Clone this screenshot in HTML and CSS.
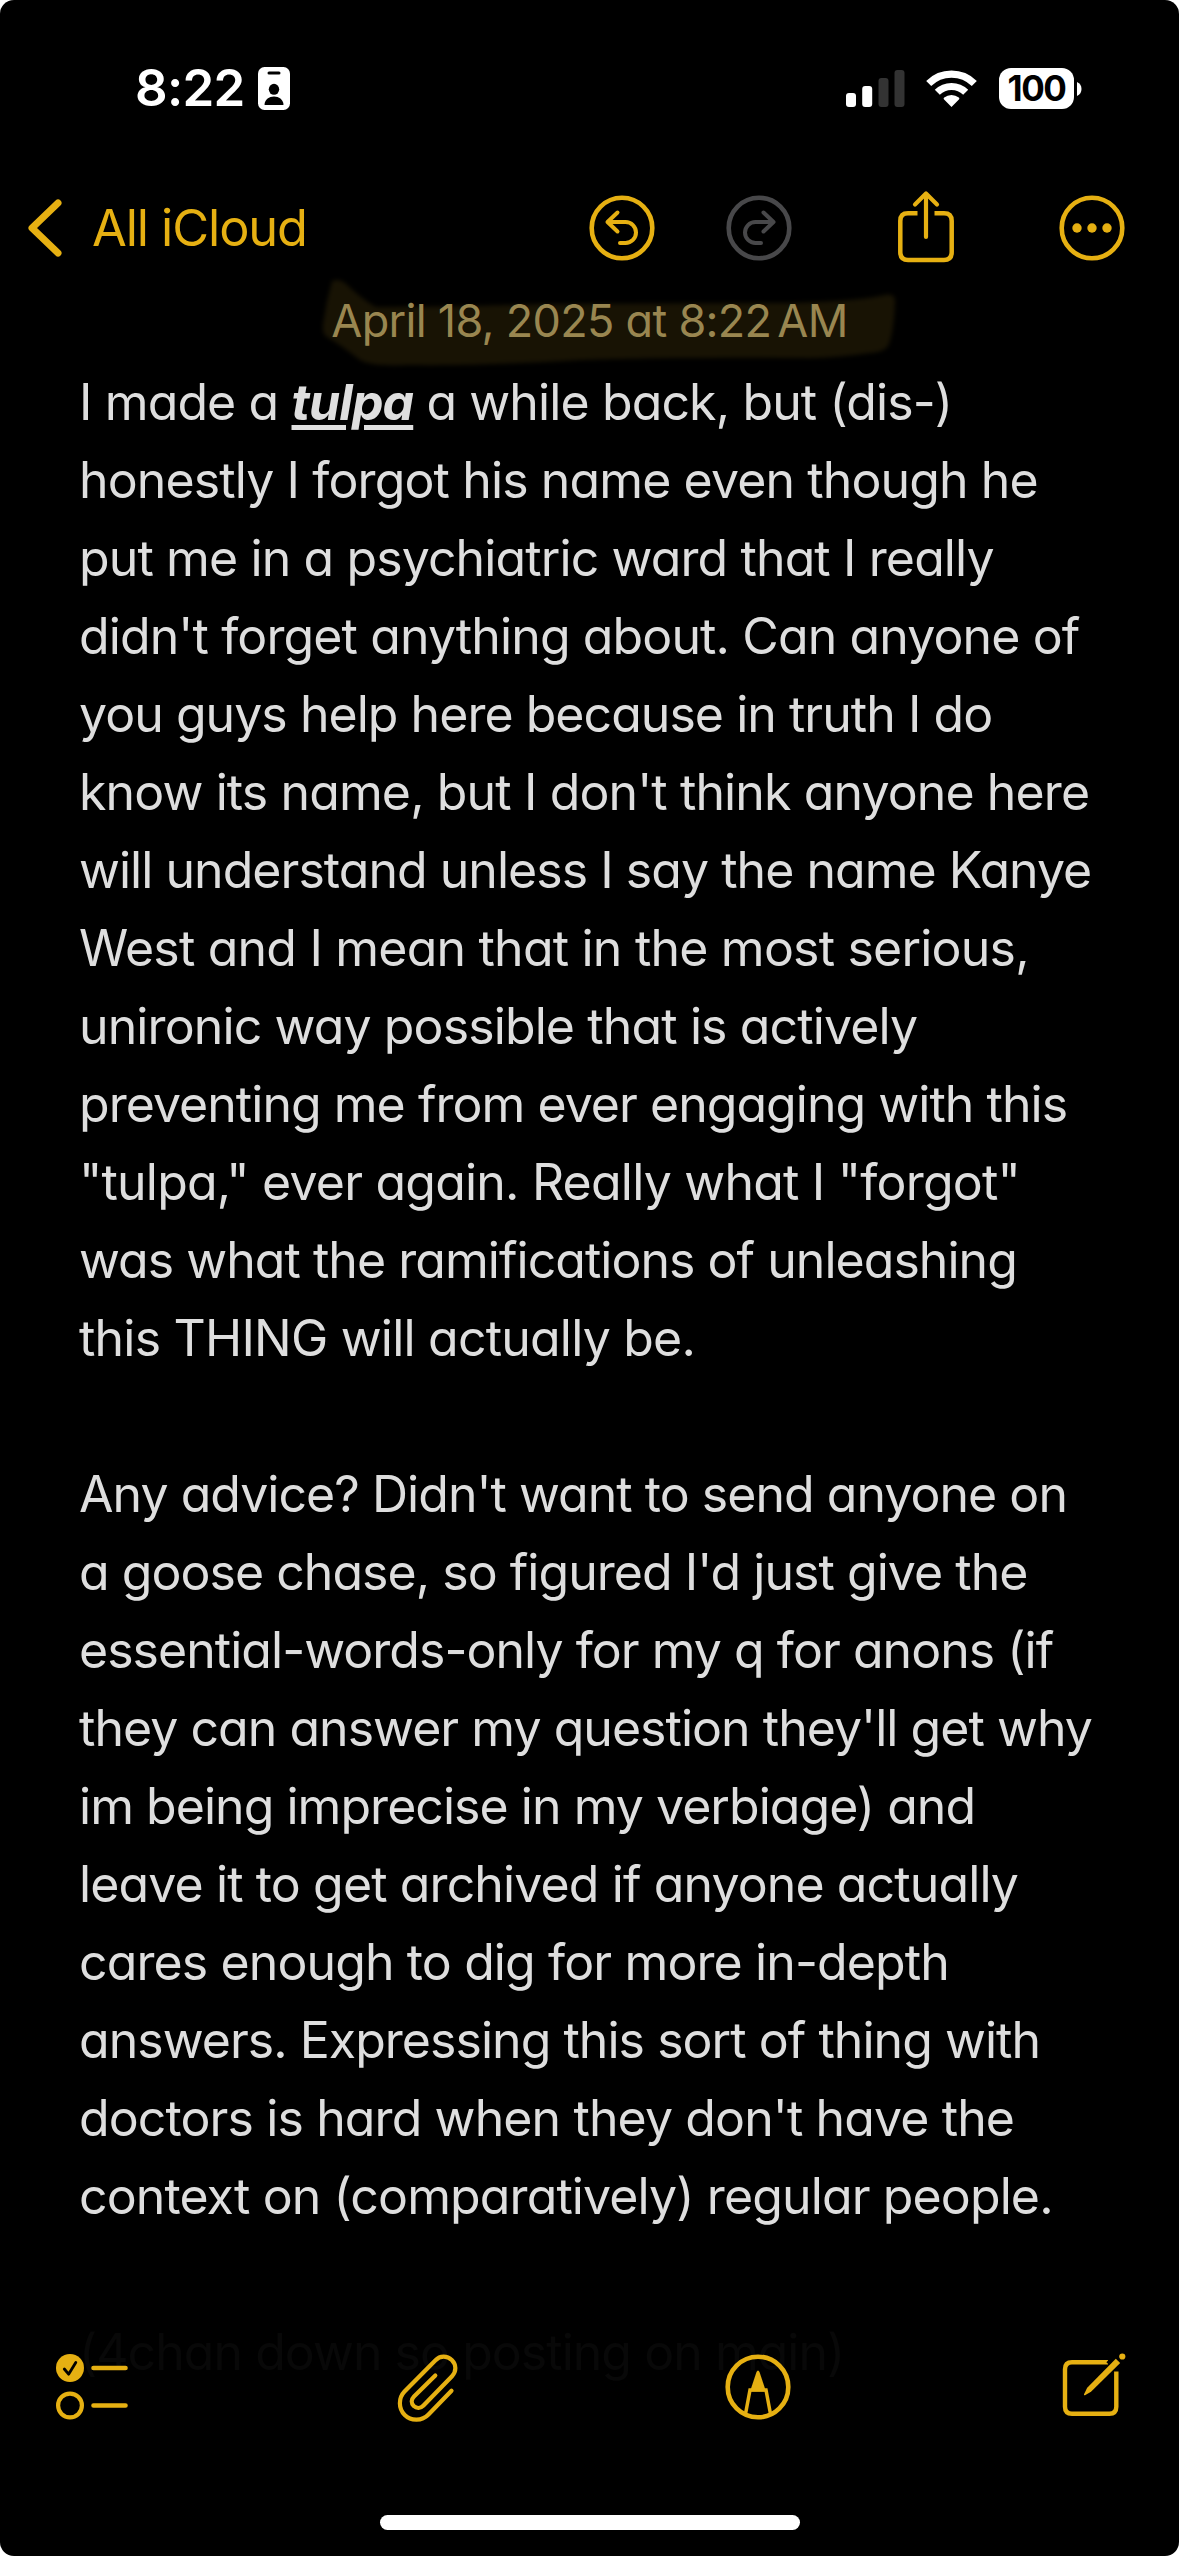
FILE: index.html
```
<!DOCTYPE html>
<html lang="en">
<head>
<meta charset="utf-8">
<title>Notes</title>
<link rel="stylesheet" href="styles.css">
</head>
<body>
<div class="screen">
  <header class="status">
    <div class="status-left">
      <span class="clock">8:22</span>
      <svg class="badge" width="32" height="43" viewBox="0 0 32 43">
        <rect width="32" height="43" rx="6.5" fill="#fff"/>
        <rect x="9.5" y="4.5" width="13" height="3" rx="1.5" fill="#000"/>
        <ellipse cx="16" cy="22.3" rx="5.2" ry="5.5" fill="#000"/>
        <path d="M6.5 37.2c.6-4.600 4.500-7.700 9.500-7.700s8.900 3.100 9.500 7.700q.1.900-.9.900H7.400q-1 0-.9-.9Z" fill="#000"/>
      </svg>
    </div>
    <div class="status-right">
      <svg width="59" height="37" viewBox="0 0 59 37">
        <rect x="0" y="23" width="10" height="14" rx="3" fill="#fff"/>
        <rect x="16.200" y="16" width="10" height="21" rx="3" fill="#fff"/>
        <rect x="32.500" y="8" width="10" height="29" rx="3" fill="#333"/>
        <rect x="48.500" y="0" width="10" height="37" rx="3" fill="#333"/>
      </svg>
      <svg class="wifi" width="51" height="37" viewBox="0 0 51 37">
        <g fill="none" stroke="#fff" stroke-width="7.200">
          <path d="M2.700 13.500a32.500 32.500 0 0 1 45.600 0"/>
          <path d="M11.300 22.300a20.300 20.300 0 0 1 28.400 0"/>
        </g>
        <path d="M25.500 37l-7.400-7.500c-.6-.6-.6-1.400.1-1.900a11.600 11.600 0 0 1 14.600 0c.7.500.7 1.300.1 1.900Z" fill="#fff"/>
      </svg>
      <span class="battery">100</span>
      <svg class="nub" width="5" height="14" viewBox="0 0 5 14"><path d="M0 0q4.500 2.200 4.500 7T0 14Z" fill="#fff"/></svg>
    </div>
  </header>

  <nav class="topbar">
    <svg class="chevron" width="36" height="60" viewBox="0 0 36 60"><path d="M31 5L5 30l26 25" fill="none" stroke="#e6b012" stroke-width="7" stroke-linecap="round" stroke-linejoin="round"/></svg>
    <span class="back">All iCloud</span>
    <svg class="undo" width="66" height="66" viewBox="0 0 66 66">
      <g fill="none" stroke="#e6b012" stroke-width="4.600" stroke-linecap="round" stroke-linejoin="round">
        <circle cx="33" cy="33" r="30.300"/>
        <path d="M28.500 17.500L18.500 27l10 9.500M19 27h17.500a10.500 10.500 0 0 1 0 21H31" stroke-width="4"/>
      </g>
    </svg>
    <svg class="redo" width="66" height="66" viewBox="0 0 66 66">
      <g fill="none" stroke="#48484a" stroke-width="4.600" stroke-linecap="round" stroke-linejoin="round">
        <circle cx="33" cy="33" r="30.300"/>
        <path d="M37.500 17.500L47.500 27l-10 9.500M47 27H29.500a10.500 10.500 0 0 0 0 21H35" stroke-width="4"/>
      </g>
    </svg>
    <svg class="share" width="58" height="74" viewBox="0 0 58 74">
      <g fill="none" stroke="#e6b012" stroke-width="4.500" stroke-linecap="round" stroke-linejoin="round">
        <path d="M20.500 23.200H11q-7.700 0-7.700 7.700v31.300q0 7.700 7.700 7.700h36q7.700 0 7.700-7.700V30.900q0-7.700-7.700-7.700h-9.500" stroke-linecap="butt"/>
        <path d="M29 47V4M18 14.500L29 3.500l11 11" stroke-width="4.200"/>
      </g>
    </svg>
    <svg class="more" width="66" height="66" viewBox="0 0 66 66">
      <circle cx="33" cy="33" r="30.300" fill="none" stroke="#e6b012" stroke-width="4.600"/>
      <g fill="#e6b012"><circle cx="18" cy="33" r="4.700"/><circle cx="33" cy="33" r="4.700"/><circle cx="48" cy="33" r="4.700"/></g>
    </svg>
  </nav>

  <div class="date">
    <svg class="marker" width="590" height="100" viewBox="0 0 590 100">
      <path d="M22 17Q29 14 35 19Q54 37 66 43Q140 43 230 40L470 39Q540 38 570 32Q586 27 585 38Q584 66 579 80Q576 88 560 89Q520 95 490 94Q360 93 270 96Q170 102 100 101Q62 103 50 96Q32 82 17 73Q12 70 13 60Q16 38 22 17Z"/>
    </svg>
    <span class="date-text">April 18, 2025 at 8:22<i class="thin"></i>AM</span>
  </div>

  <main class="note">
    <p class="line">I made a <b class="term">tulpa</b> a while back, but (dis-)</p>
    <p class="line">honestly I forgot his name even though he</p>
    <p class="line">put me in a psychiatric ward that I really</p>
    <p class="line">didn't forget anything about. Can anyone of</p>
    <p class="line tight">you guys help here because in truth I do</p>
    <p class="line">know its name, but I don't think anyone here</p>
    <p class="line tight">will understand unless I say the name Kanye</p>
    <p class="line loose">West and I mean that in the most serious,</p>
    <p class="line">unironic way possible that is actively</p>
    <p class="line tight">preventing me from ever engaging with this</p>
    <p class="line loose">"tulpa," ever again. Really what I "forgot"</p>
    <p class="line tight">was what the ramifications of unleashing</p>
    <p class="line loose">this THING will actually be.</p>
    <p class="line"></p>
    <p class="line tight">Any advice? Didn't want to send anyone on</p>
    <p class="line tight">a goose chase, so figured I'd just give the</p>
    <p class="line tight">essential-words-only for my q for anons (if</p>
    <p class="line tight">they can answer my question they'll get why</p>
    <p class="line tight">im being imprecise in my verbiage) and</p>
    <p class="line">leave it to get archived if anyone actually</p>
    <p class="line">cares enough to dig for more in-depth</p>
    <p class="line tight">answers. Expressing this sort of thing with</p>
    <p class="line">doctors is hard when they don't have the</p>
    <p class="line">context on (comparatively) regular people.</p>
    <p class="line"></p>
    <p class="line faded tight">(4chan down so posting on main)</p>
  </main>

  <footer class="toolbar">
    <svg class="checklist" width="76" height="70" viewBox="0 0 76 70">
      <circle cx="16" cy="16" r="14" fill="#e6b012"/>
      <path d="M10.300 17l4.300 5.200L21.800 10.500" fill="none" stroke="#000" stroke-width="2.800" stroke-linecap="round" stroke-linejoin="round"/>
      <circle cx="16" cy="53.500" r="11.900" fill="none" stroke="#e6b012" stroke-width="4.200"/>
      <path d="M39.500 16h32M39.500 53.500h32" stroke="#e6b012" stroke-width="4.600" stroke-linecap="round"/>
    </svg>
    <svg class="clip" width="64" height="72" viewBox="0 0 64 72">
      <path d="M56.500 38.700L33.500 62.500C27 69.300 16 69.300 9.700 63C3.300 56.500 3.300 46 9.500 39.500L40.500 8.300C45 3.500 52 3.500 56.800 8C61.500 12.700 61.500 19.500 57 24.200L28.500 53.500C25.500 56.500 21.500 56.500 18.800 54C16 51.200 16 47.500 19 44.500L40.300 23.500" fill="none" stroke="#e6b012" stroke-width="4.200" stroke-linecap="round" stroke-linejoin="round"/>
    </svg>
    <svg class="pen" width="66" height="66" viewBox="0 0 66 66">
      <circle cx="33" cy="33" r="30.300" fill="none" stroke="#e6b012" stroke-width="4.600"/>
      <path d="M20.500 60l4.500-24h16l4.500 24" fill="none" stroke="#e6b012" stroke-width="3.500"/>
      <path d="M31.500 18q1.500-3 3 0l6.500 19.500H25Z" fill="#e6b012"/>
    </svg>
    <svg class="compose" width="66" height="68" viewBox="0 0 66 68">
      <path d="M47 10.300H11Q4 10.300 4 17.300V54.800Q4 61.800 11 61.800H48.300Q55.300 61.800 55.300 54.800V19.500" fill="none" stroke="#e6b012" stroke-width="4.400"/>
      <path d="M48.500 7L58 16" stroke="#000" stroke-width="9"/>
      <path d="M54.800 6.800l4.400 4.100L30 39.800l-6 3.400q-1.500.4-1-1l3.200-6.500Z" fill="#e6b012"/>
      <circle cx="61.300" cy="4.500" r="3.100" fill="#e6b012"/>
    </svg>
  </footer>
  <div class="home"></div>
</div>
</body>
</html>
```
FILE: styles.css
```
html, body { margin: 0; background: #fff; }
.screen {
  width: 1179px;
  height: 2556px;
  background: #000;
  border-radius: 14px;
  overflow: hidden;
  display: flex;
  flex-direction: column;
  font-family: Inter, "Liberation Sans", sans-serif;
  font-feature-settings: "cv11";
}
svg { display: block; flex: none; }

.status {
  height: 177px;
  box-sizing: border-box;
  flex: none;
  display: flex;
  justify-content: space-between;
  padding: 0 97px 0 135px;
}
.status-left, .status-right { display: flex; align-items: center; height: 177px; }
.clock { color: #fff; font-size: 51px; font-weight: 600; letter-spacing: -0.7px; width: 123px; padding-bottom: 2px; box-sizing: border-box; }
.wifi { margin-left: 21px; }
.battery {
  margin-left: 22px;
  width: 75px;
  height: 41px;
  border-radius: 12px;
  background: #fff;
  color: #000;
  font-size: 35px;
  font-weight: 700;
  line-height: 41px;
  text-align: center;
  letter-spacing: -1.5px;
}
.nub { margin-left: 3px; }

.topbar {
  height: 103px;
  box-sizing: border-box;
  flex: none;
  display: flex;
  align-items: center;
  padding: 0 0 1px 27px;
}
.back { color: #e6b012; font-size: 50.5px; letter-spacing: -1.1px; margin-left: 29px; width: 497px; padding-bottom: 2px; }
.redo { margin-left: 71px; }
.share { margin-left: 105px; margin-top: -3px; }
.more { margin-left: 104px; margin-top: -1px; }

.date {
  position: relative;
  height: 84px;
  box-sizing: border-box;
  padding-bottom: 3px;
  flex: none;
  display: flex;
  justify-content: center;
  align-items: center;
}
.marker { position: absolute; left: 310px; top: -16px; overflow: visible; }
.marker path { fill: #181304; filter: blur(2px); }
.date-text { position: relative; font-size: 45px; letter-spacing: -0.7px; color: #998650; white-space: nowrap; }
.thin { display: inline-block; width: 6px; }

.note { padding-left: 79px; margin-top: -1px; height: 1958px; flex: none; color: #dedede; font-size: 50px; letter-spacing: -0.88px; }
.line { margin: 0; height: 78px; line-height: 78px; white-space: nowrap; }
.tight { letter-spacing: -0.96px; }
.loose { letter-spacing: -0.79px; }
.term {
  font-weight: 700;
  font-style: italic;
  text-decoration: underline;
  text-decoration-thickness: 5px;
  text-underline-offset: 5px;
}
.faded { color: #080808; }

.toolbar {
  display: flex;
  align-items: flex-start;
  height: 163px;
  padding-left: 54px;
  margin-top: 31px;
}
.clip { margin-left: 265px; }
.pen { margin-left: 266px; margin-top: 2px; }
.compose { margin-left: 270px; }
.home { width: 420px; height: 15px; flex: none; border-radius: 8px; background: #fff; margin: 0 0 26px 380px; }
```
